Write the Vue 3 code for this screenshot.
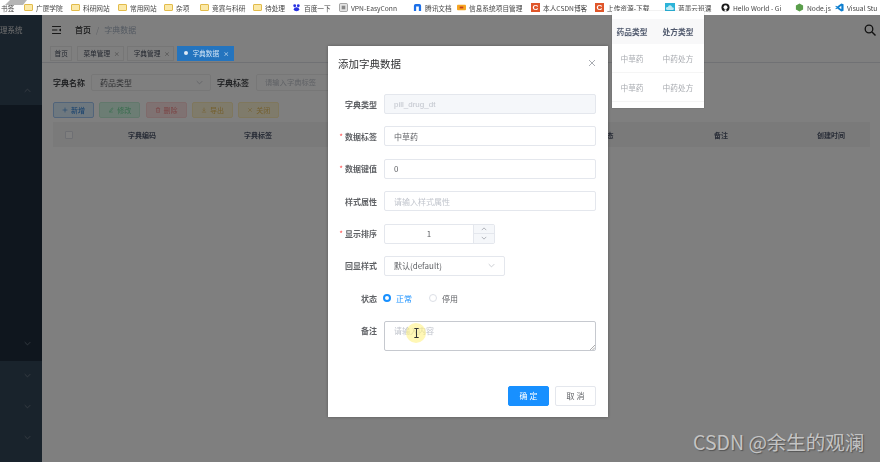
<script setup>
const bookmarks = [
  { text: '书签', icon: 'none', w: 21 },
  { text: '广厦学院', icon: 'folder', w: 47 },
  { text: '科研网站', icon: 'folder', w: 47 },
  { text: '常用网站', icon: 'folder', w: 46 },
  { text: '杂项', icon: 'folder', w: 36 },
  { text: '竞赛与科研', icon: 'folder', w: 53 },
  { text: '待处理', icon: 'folder', w: 39 },
  { text: '百度一下', icon: 'baidu', w: 47 },
  { text: 'VPN-EasyConn', icon: 'vpn', w: 74 },
  { text: '腾讯文档', icon: 'tx', w: 44 },
  { text: '信息系统项目管理', icon: 'xin', w: 74 },
  { text: '本人CSDN博客', icon: 'c', w: 64 },
  { text: '上传资源-下载', icon: 'c', w: 70 },
  { text: '蓝墨云班课', icon: 'cloud', w: 56 },
  { text: 'Hello World - Gi', icon: 'gh', w: 74 },
  { text: 'Node.js', icon: 'node', w: 40 },
  { text: 'Visual Stu', icon: 'vs', w: 50 }
]
const tags = [
  { text: '首页', close: false },
  { text: '菜单管理', close: true },
  { text: '字典管理', close: true },
  { text: '字典数据', close: true, active: true }
]
const buttons = [
  { text: '新增', tone: 'blue', d: 'M5 1v8M1 5h8' },
  { text: '修改', tone: 'green', d: 'M2 8.500h6M3 6.500 7 1.500l1.300 1-4 5-1.800.5z' },
  { text: '删除', tone: 'red', d: 'M1.500 2.500h7M3.800 2.500V1h2.400v1.500M2.500 2.500v6.500h5V2.500M5 4.500v3' },
  { text: '导出', tone: 'orange', d: 'M5 1v5M3 4.500 5 6.500l2-2M1.500 8.500h7' },
  { text: '关闭', tone: 'orange', d: 'M2 2l6 6M8 2 2 8' }
]
const columns = [
  { text: '', w: 31 },
  { text: '字典编码', w: 116 },
  { text: '字典标签', w: 116 },
  { text: '字典键值', w: 116 },
  { text: '字典排序', w: 116 },
  { text: '状态', w: 117 },
  { text: '备注', w: 112 },
  { text: '创建时间', w: 108 }
]
const chevrons = [344, 376, 407, 438]
</script>

<template>
  <div class="shell">
    <div class="bookmarks">
      <div v-for="b in bookmarks" :key="b.text" class="bm" :style="{ width: b.w + 'px' }">
        <span v-if="b.icon === 'folder'" class="folder"></span>
        <svg v-else-if="b.icon === 'baidu'" class="bi" viewBox="0 0 10 10"><circle cx="3" cy="3" r="1.600" fill="#2932e1"/><circle cx="7" cy="3" r="1.600" fill="#2932e1"/><ellipse cx="5" cy="7" rx="3" ry="2.200" fill="#2932e1"/></svg>
        <svg v-else-if="b.icon === 'vpn'" class="bi" viewBox="0 0 10 10"><rect x=".5" y=".5" width="9" height="9" rx="1.500" fill="#e4e4e4" stroke="#999"/><rect x="3" y="3" width="4" height="4" fill="#888"/></svg>
        <svg v-else-if="b.icon === 'tx'" class="bi" viewBox="0 0 10 10"><path d="M1 9V3a2 2 0 0 1 2-2h4a2 2 0 0 1 2 2v6H6.500V4h-3v5z" fill="#1b6fe8"/></svg>
        <svg v-else-if="b.icon === 'xin'" class="bi" viewBox="0 0 10 10"><rect y="2" width="10" height="6" rx="1" fill="#f5a623"/><rect x="3" y="4" width="4" height="2" fill="#c9401a"/></svg>
        <span v-else-if="b.icon === 'c'" class="cs">C</span>
        <svg v-else-if="b.icon === 'cloud'" class="bi cloud" viewBox="0 0 10 10"><rect width="10" height="10" fill="#2bb3d8"/><path d="M2 7a1.500 1.500 0 0 1 1-3 2 2 0 0 1 4 .500A1.300 1.300 0 0 1 8 7z" fill="#bdeaf5"/></svg>
        <svg v-else-if="b.icon === 'gh'" class="bi" viewBox="0 0 10 10"><circle cx="5" cy="5" r="4.500" fill="#1a1a1a"/><circle cx="5" cy="4.600" r="2.200" fill="#fff"/><rect x="4" y="7" width="2" height="2.500" fill="#fff"/></svg>
        <svg v-else-if="b.icon === 'node'" class="bi" viewBox="0 0 10 10"><path d="M5 .5 9 2.800v4.400L5 9.500 1 7.200V2.800z" fill="#5a9e4b"/></svg>
        <svg v-else-if="b.icon === 'vs'" class="bi" viewBox="0 0 10 10"><path d="M7 .5 9.500 1.500v7L7 9.500 2.500 6 1 7 .3 6.500 2 5 .3 3.500 1 3l1.500 1z" fill="#0e7fd0"/><path d="M7 3 4.500 5 7 7z" fill="#fff"/></svg>
        <span class="bm-text">{{ b.text }}</span>
      </div>
    </div>

    <div class="app-body">
      <aside class="sidebar">
        <div class="brand">理系统</div>
        <svg class="up-chev" viewBox="0 0 10 6"><path d="M1 5 5 1l4 4" fill="none" stroke="#7f8b98" stroke-width="1"/></svg>
        <div class="submenu"></div>
        <svg
          v-for="y in chevrons"
          :key="y"
          class="down-chev"
          :style="{ top: y - 18 + 'px' }"
          viewBox="0 0 10 6"
        ><path d="M1 1l4 4 4-4" fill="none" stroke="#7f8b98" stroke-width="1"/></svg>
      </aside>

      <main class="page">
        <header class="navbar">
          <svg class="hamburger" viewBox="0 0 10 9"><path d="M0 .5h10M0 4.500h6M0 8.500h10" stroke="#222" stroke-width="1.100"/><path d="M10 2.800 7.500 4.500 10 6.200z" fill="#222"/></svg>
          <span class="crumb-a">首页</span>
          <span class="crumb-sep">/</span>
          <span class="crumb-b">字典数据</span>
          <svg class="search" viewBox="0 0 12 12"><circle cx="5" cy="5" r="3.800" fill="none" stroke="#222" stroke-width="1.300"/><path d="M8 8l3.500 3.500" stroke="#222" stroke-width="1.400"/></svg>
        </header>

        <nav class="tags">
          <div v-for="t in tags" :key="t.text" class="tag" :class="{ active: t.active, plain: !t.close }">
            <span v-if="t.active" class="dot"></span>
            <span>{{ t.text }}</span>
            <span v-if="t.close" class="x">×</span>
          </div>
        </nav>

        <section class="content">
          <div class="query">
            <span class="q-label">字典名称</span>
            <div class="q-select">
              <span>药品类型</span>
              <svg class="chev" viewBox="0 0 10 6"><path d="M1 1l4 4 4-4" fill="none" stroke="#b4b8c0"/></svg>
            </div>
            <span class="q-label second">字典标签</span>
            <div class="q-input">请输入字典标签</div>
          </div>

          <div class="actions">
            <div v-for="b in buttons" :key="b.text" class="act" :class="b.tone">
              <svg class="act-icon" viewBox="0 0 10 10"><path :d="b.d" fill="none" stroke="currentColor" stroke-width=".9"/></svg>
              <span>{{ b.text }}</span>
            </div>
          </div>

          <div class="thead">
            <div v-for="(c, i) in columns" :key="i" class="th" :style="{ width: c.w + 'px' }">
              <span v-if="i === 0" class="check"></span>
              <span v-else>{{ c.text }}</span>
            </div>
          </div>
        </section>
      </main>
    </div>

    <div class="overlay">
      <div class="dialog">
        <div class="d-head">
          <span class="d-title">添加字典数据</span>
          <svg class="d-close" viewBox="0 0 8 8"><path d="M1 1l6 6M7 1 1 7" stroke="#a0a4aa" stroke-width=".9"/></svg>
        </div>
        <div class="d-form">
          <div class="row">
            <label class="lbl">字典类型</label>
            <div class="field disabled">pill_drug_dt</div>
          </div>
          <div class="row">
            <label class="lbl"><i>*</i>数据标签</label>
            <div class="field">中草药</div>
          </div>
          <div class="row">
            <label class="lbl"><i>*</i>数据键值</label>
            <div class="field">0</div>
          </div>
          <div class="row">
            <label class="lbl">样式属性</label>
            <div class="field ph">请输入样式属性</div>
          </div>
          <div class="row">
            <label class="lbl"><i>*</i>显示排序</label>
            <div class="number">
              <span class="num-val">1</span>
              <div class="steps">
                <span class="step"><svg viewBox="0 0 8 5"><path d="M1 4 4 1l3 3" fill="none" stroke="#9a9ea5"/></svg></span>
                <span class="step"><svg viewBox="0 0 8 5"><path d="M1 1l3 3 3-3" fill="none" stroke="#9a9ea5"/></svg></span>
              </div>
            </div>
          </div>
          <div class="row">
            <label class="lbl">回显样式</label>
            <div class="field select">
              <span>默认(default)</span>
              <svg class="chev" viewBox="0 0 10 6"><path d="M1 1l4 4 4-4" fill="none" stroke="#b4b8c0"/></svg>
            </div>
          </div>
          <div class="row">
            <label class="lbl">状态</label>
            <div class="radios">
              <span class="radio on"></span><span class="r-text on-text">正常</span>
              <span class="radio"></span><span class="r-text">停用</span>
            </div>
          </div>
          <div class="row tall">
            <label class="lbl top">备注</label>
            <div class="textarea">
              <span>请输入内容</span>
              <svg class="grip" viewBox="0 0 6 6"><path d="M6 1 1 6M6 3.500 3.500 6" stroke="#888" stroke-width=".7"/></svg>
            </div>
          </div>
        </div>
        <div class="d-foot">
          <div class="btn primary">确 定</div>
          <div class="btn">取 消</div>
        </div>
      </div>
    </div>

    <div class="popup">
      <div class="p-row p-head"><span>药品类型</span><span>处方类型</span></div>
      <div class="p-row"><span>中草药</span><span>中药处方</span></div>
      <div class="p-row"><span>中草药</span><span>中药处方</span></div>
    </div>

    <div class="pointer">
      <svg viewBox="0 0 8 12"><path d="M1.500 .8h5M1.500 11.200h5M4 .8v10.400" fill="none" stroke="#333" stroke-width="1.200"/></svg>
    </div>

    <svg class="corner" viewBox="0 0 25 5"><path d="M3 5 8 0h17l-4 5z" fill="#b5b5b5"/></svg>

    <div class="watermark">CSDN @余生的观澜</div>
  </div>
</template>

<style>
html, body { margin: 0; background: #808080; overflow: hidden; }
</style>

<style scoped>
.shell {
  position: relative;
  width: 880px;
  height: 462px;
  overflow: hidden;
  display: flex;
  flex-direction: column;
  font-family: "Noto Sans CJK SC", "Liberation Sans", sans-serif;
  background: #fff;
}
.bookmarks {
  height: 15px;
  flex: none;
  background: #fff;
  display: flex;
  align-items: center;
  font-size: 6.700px;
  color: #444;
  white-space: nowrap;
  overflow: hidden;
  filter: blur(.35px);
}
.bm { flex: none; display: flex; align-items: center; gap: 3px; overflow: hidden; padding-left: 3px; box-sizing: border-box; }
.bm:first-child { padding-left: 1px; }
.folder { width: 9px; height: 7px; flex: none; background: #fbe9a8; border: 1px solid #e2bb4a; box-sizing: border-box; border-radius: 1px; }
.bi { width: 9px; height: 9px; flex: none; }
.cloud { width: 10px; height: 10px; }
.cs { width: 9px; height: 9px; flex: none; background: #e0562a; color: #fff; font: bold 8px/9px "Liberation Sans", sans-serif; text-align: center; }
.corner { position: absolute; left: 2px; top: 0; width: 25px; height: 5px; }

.app-body { flex: 1; display: flex; min-height: 0; }
.sidebar { width: 42px; flex: none; background: #334658; position: relative; display: flex; flex-direction: column; filter: blur(.4px); }
.brand { font-size: 7.500px; color: #ddd; height: 90px; padding-top: 9px; box-sizing: border-box; white-space: nowrap; overflow: hidden; }
.up-chev { position: absolute; left: 24px; top: 73px; width: 7px; height: 5px; }
.submenu { height: 256px; background: #1f2d3d; }
.down-chev { position: absolute; left: 24px; width: 7px; height: 5px; }

.page { flex: 1; min-width: 0; background: #fff; display: flex; flex-direction: column; }
.navbar { height: 29px; flex: none; display: flex; align-items: center; font-size: 8px; padding: 0 2px 0 10px; box-sizing: border-box; filter: blur(.45px); }
.hamburger { width: 9px; height: 8px; margin-right: 14px; }
.crumb-a { color: #303133; font-weight: 500; }
.crumb-sep { color: #c0c4cc; margin: 0 5px; }
.crumb-b { color: #a8b4c4; }
.search { width: 12px; height: 12px; margin-left: auto; margin-right: 2px; }

.tags { height: 19px; flex: none; box-sizing: border-box; border-bottom: 1px solid #e0e2e8; display: flex; align-items: center; padding-left: 8px; gap: 3px; font-size: 6.700px; color: #495060; }
.tag { height: 15px; box-sizing: border-box; border: 1px solid #ececec; display: flex; align-items: center; padding: 0 5.500px; gap: 3.500px; background: #fff; white-space: nowrap; filter: blur(.4px); }
.tag.plain { padding: 0 3.500px; margin-right: 1.500px; }
.tag .x { color: #888; font-size: 6px; width: 4px; }
.tag.active { position: relative; z-index: 1; background: #2474be; border-color: #2474be; color: #cfe2f5; padding: 0 6px; gap: 4px; }
.tag.active .x { color: #dfeaf6; }
.dot { width: 4px; height: 4px; border-radius: 50%; background: #dfeaf6; }

.content { flex: 1; padding: 10px 10px 0 11px; }
.query { display: flex; align-items: center; height: 18px; font-size: 8px; filter: blur(.4px); }
.q-label { color: #4a4c50; font-weight: 700; width: 38px; flex: none; white-space: nowrap; }
.q-label.second { margin-left: 6px; }
.q-select { width: 120px; height: 17px; box-sizing: border-box; border: 1px solid #eeeeee; border-radius: 2px; display: flex; align-items: center; justify-content: space-between; padding: 0 7px 0 8px; color: #606266; }
.q-input { width: 160px; height: 17px; box-sizing: border-box; border: 1px solid #eeeeee; border-radius: 2px; display: flex; align-items: center; padding-left: 8px; margin-left: 1px; color: #c0c4cc; font-size: 7.300px; }
.chev { width: 7px; height: 5px; flex: none; }

.actions { display: flex; gap: 5.300px; margin-top: 11px; filter: blur(.4px); }
.act { width: 41px; height: 16px; box-sizing: border-box; border: 1px solid; border-radius: 2px; display: flex; align-items: center; justify-content: center; gap: 3px; font-size: 7px; }
.act-icon { width: 6px; height: 6px; flex: none; }
.blue { background: #dcf0ff; border-color: #a3c8f5; color: #2a7fd8; }
.green { background: #d8fbe8; border-color: #c5f0d8; color: #6fd89a; }
.red { background: #ffe4e4; border-color: #ffd6d6; color: #f58a8a; }
.orange { background: #fff6d6; border-color: #ffeeba; color: #e6bd5a; }

.thead { margin-top: 4px; height: 25px; display: flex; align-items: center; background: #f4f4f5; font-size: 7px; font-weight: 700; color: #515a6e; filter: blur(.4px); }
.th { flex: none; display: flex; justify-content: center; align-items: center; box-sizing: border-box; white-space: nowrap; }
.check { width: 8px; height: 8px; box-sizing: border-box; background: #fff; border: 1px solid #dcdfe6; border-radius: 1px; }

.overlay { position: absolute; left: 0; right: 0; top: 15px; bottom: 0; background: rgba(0, 0, 0, .5); padding: 31px 0 0 328px; box-sizing: border-box; }
.dialog { width: 280px; height: 371px; background: #fff; position: relative; box-sizing: border-box; box-shadow: 0 0 3px rgba(0,0,0,.3); filter: blur(.45px); display: flex; flex-direction: column; }
.d-head { height: 48px; flex: none; display: flex; align-items: center; justify-content: space-between; padding: 0 12px 14px 10px; box-sizing: border-box; }
.d-title { font-size: 10.500px; color: #303133; }
.d-close { width: 8px; height: 8px; }
.d-form { display: flex; flex-direction: column; gap: 12.400px; }
.row { display: flex; height: 20px; align-items: center; gap: 7px; font-size: 8px; }
.row.tall { height: 30px; align-items: flex-start; }
.lbl { width: 49px; flex: none; text-align: right; color: #606266; font-weight: 700; white-space: nowrap; }
.lbl.top { padding-top: 4px; }
.lbl i { color: #ff4949; font-style: normal; margin-right: 2px; font-weight: 400; }
.field { width: 212px; height: 20px; box-sizing: border-box; border: 1px solid #e4e7ed; border-radius: 2px; display: flex; align-items: center; padding: 0 9px; color: #606266; }
.field.disabled { background: #f5f7fa; color: #c0c4cc; font-family: "Liberation Sans", sans-serif; }
.field.ph { color: #c0c4cc; }
.field.select { width: 121px; justify-content: space-between; }
.number { width: 111px; height: 20px; box-sizing: border-box; border: 1px solid #e4e7ed; border-radius: 2px; display: flex; align-items: stretch; color: #606266; }
.num-val { flex: 1; display: flex; align-items: center; justify-content: center; }
.steps { width: 20px; flex: none; display: flex; flex-direction: column; background: #f5f7fa; border-left: 1px solid #e4e7ed; }
.step { flex: 1; display: flex; align-items: center; justify-content: center; }
.step:first-child { border-bottom: 1px solid #e4e7ed; }
.step svg { width: 6px; height: 4px; }
.radios { display: flex; align-items: center; color: #606266; margin-left: -1px; }
.radio { width: 8px; height: 8px; box-sizing: border-box; border: 1px solid #dcdfe6; border-radius: 50%; background: #fff; flex: none; }
.radio.on { border: 2.500px solid #1890ff; }
.r-text { margin-left: 5px; margin-right: 17px; }
.on-text { color: #1890ff; }
.textarea { position: relative; width: 212px; height: 30px; box-sizing: border-box; border: 1px solid #c6c9cf; border-radius: 2px; padding: 3px 9px; color: #c0c4cc; }
.grip { position: absolute; right: 0; bottom: 0; width: 6px; height: 6px; }
.d-foot { margin-top: 35px; display: flex; justify-content: flex-end; gap: 6px; padding-right: 12px; }
.btn { width: 41px; height: 20px; box-sizing: border-box; border: 1px solid #e4e7ed; border-radius: 2px; display: flex; align-items: center; justify-content: center; font-size: 8px; color: #606266; }
.btn.primary { background: #1890ff; border-color: #1890ff; color: #fff; }

.popup { position: absolute; left: 612px; top: 11px; width: 92px; height: 97px; box-sizing: border-box; background: #fff; padding-top: 8px; filter: blur(.45px); box-shadow: 0 0 1px rgba(0,0,0,.3); }
.p-row { display: flex; height: 28px; align-items: center; border-bottom: 1px solid #f5f5f5; font-size: 7.700px; color: #a8abb0; }
.p-row span { width: 46px; text-align: center; white-space: nowrap; position: relative; left: -3px; }
.p-head { height: 25px; background: #f8f8f9; color: #515a6e; font-weight: 700; border: 0; }

.pointer { position: absolute; left: 406px; top: 323px; width: 20px; height: 20px; border-radius: 50%; background: rgba(255, 240, 120, .55); display: flex; align-items: center; justify-content: center; filter: blur(.4px); }
.pointer svg { width: 7px; height: 12px; }

.watermark { position: absolute; left: 693px; top: 430px; font-family: "Noto Sans CJK SC", "Liberation Sans", sans-serif; font-size: 19.500px; line-height: 24px; color: #c4c4c4; text-shadow: 1px 1px 1px rgba(50,50,50,.55); white-space: nowrap; }
</style>
